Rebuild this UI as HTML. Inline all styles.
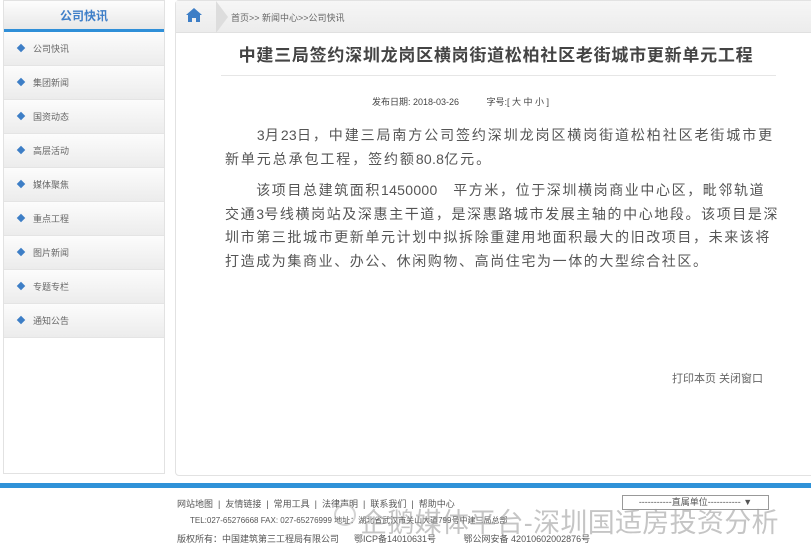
<!DOCTYPE html>
<html><head><meta charset="utf-8"><style>
*{margin:0;padding:0;box-sizing:border-box}
body{width:811px;height:547px;background:#fff;font-family:"Liberation Sans","Noto Sans CJK SC",sans-serif;position:relative;overflow:hidden;color:#555}
.side{position:absolute;left:3px;top:0;width:162px;height:474px;border:1px solid #e2e2e2;background:#fff}
.sh{height:31px;background:linear-gradient(#fdfdfd,#e8e8e8);text-align:center;font-size:12px;font-weight:bold;color:#3f7fc8;line-height:31px;border-bottom:3px solid #2f8fd8}
.it{height:34px;background:linear-gradient(#fcfcfc,#ececec);border-bottom:1px solid #e4e4e4;font-size:9px;color:#666;line-height:34px;padding-left:14px}
.it b{display:inline-block;width:6px;height:6px;background:#3d7ec6;transform:rotate(45deg);margin-right:9px;vertical-align:1px}
.main{position:absolute;left:175px;top:0;width:640px;height:476px;border:1px solid #e2e2e2;border-radius:4px;background:#fff}
.bc{height:32px;background:linear-gradient(#f6f6f6,#ececec);border-bottom:1px solid #e0e0e0;position:relative;font-size:9px;color:#666}
.bc span{position:absolute;left:55px;top:10px}
.arr{position:absolute;left:40px;top:0;width:0;height:0;border-top:16px solid transparent;border-bottom:16px solid transparent;border-left:12px solid #ddd}
h1{position:absolute;left:0;width:640px;text-align:center;top:40px;font-size:17px;color:#444;font-weight:bold;letter-spacing:0.75px}
.hr{position:absolute;left:45px;top:74px;width:555px;border-top:1px solid #e6e6e6}
.meta{position:absolute;left:196px;top:94px;font-size:9px;color:#444}
p{position:absolute;left:49px;width:600px;font-size:14px;line-height:23.5px;color:#555;letter-spacing:1.9px;white-space:nowrap}
p i{font-style:normal;letter-spacing:0.3px}
.p2{letter-spacing:1.6px}
.pr{position:absolute;left:496px;top:369px;font-size:11px;color:#666}
.blue{position:absolute;left:0;top:483px;width:811px;height:5px;background:#2f92d8}
.ft{position:absolute;font-size:9px;color:#555;white-space:nowrap}
.sel{position:absolute;left:622px;top:495px;width:147px;height:15px;border:1px solid #999;font-size:9px;text-align:center;line-height:13px}
.wm{position:absolute;left:360px;top:501px;font-size:27px;color:rgba(150,150,150,.55);white-space:nowrap;letter-spacing:0.3px}
.wc{position:absolute;left:334px;top:504px;width:22px;height:22px;border-radius:50%;border:2px solid rgba(170,170,170,.5)}
</style></head><body>
<div class="side"><div class="sh">公司快讯</div>
<div class="it"><b></b>公司快讯</div><div class="it"><b></b>集团新闻</div><div class="it"><b></b>国资动态</div><div class="it"><b></b>高层活动</div><div class="it"><b></b>媒体聚焦</div><div class="it"><b></b>重点工程</div><div class="it"><b></b>图片新闻</div><div class="it"><b></b>专题专栏</div><div class="it"><b></b>通知公告</div>
</div>
<div class="main">
<div class="bc"><svg style="position:absolute;left:10px;top:6px" width="16" height="16" viewBox="0 0 16 16"><path d="M8 1L0 8h2v7h4v-4h4v4h4V8h2z" fill="#3d7ec6"/></svg><div class="arr"></div><span>首页&gt;&gt; 新闻中心&gt;&gt;公司快讯</span></div>
<h1>中建三局签约深圳龙岗区横岗街道松柏社区老街城市更新单元工程</h1>
<div class="hr"></div>
<div class="meta">发布日期: 2018-03-26 &nbsp;&nbsp;&nbsp;&nbsp;&nbsp;&nbsp;&nbsp;&nbsp;&nbsp;&nbsp;字号:[ 大 中 小 ]</div>
<p style="top:123px">　　<i>3</i>月<i>23</i>日，中建三局南方公司签约深圳龙岗区横岗街道松柏社区老街城市更<br>新单元总承包工程，签约额<i>80.8</i>亿元。</p>
<p class="p2" style="top:178px">　　该项目总建筑面积<i>1450000</i>　平方米，位于深圳横岗商业中心区，毗邻轨道<br>交通<i>3</i>号线横岗站及深惠主干道，是深惠路城市发展主轴的中心地段。该项目是深<br>圳市第三批城市更新单元计划中拟拆除重建用地面积最大的旧改项目，未来该将<br>打造成为集商业、办公、休闲购物、高尚住宅为一体的大型综合社区。</p>
<div class="pr">打印本页 关闭窗口</div>
</div>
<div class="blue"></div>
<div class="ft" style="left:177px;top:497px">网站地图 &nbsp;|&nbsp; 友情链接 &nbsp;|&nbsp; 常用工具 &nbsp;|&nbsp; 法律声明 &nbsp;|&nbsp; 联系我们 &nbsp;|&nbsp; 帮助中心</div>
<div class="sel">-----------直属单位----------- ▼</div>
<div class="ft" style="left:190px;top:515px;font-size:8px">TEL:027-65276668 FAX: 027-65276999 地址：湖北省武汉市关山大道799号中建三局总部</div>
<div class="ft" style="left:177px;top:532px">版权所有：中国建筑第三工程局有限公司 &nbsp;&nbsp;&nbsp;&nbsp; 鄂ICP备14010631号 &nbsp;&nbsp;&nbsp;&nbsp;&nbsp;&nbsp;&nbsp;&nbsp;&nbsp; 鄂公网安备 42010602002876号</div>
<div class="wc"></div>
<div class="wm">企鹅媒体平台-深圳国适房投资分析</div>
</body></html>
